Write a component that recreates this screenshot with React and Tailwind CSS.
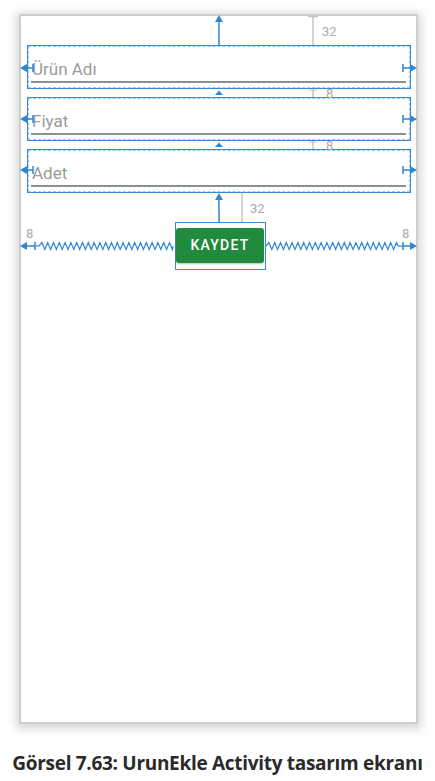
import React from "react";

const B = "#2f86d3";
const G = "#c3c6c6";

function zig(x1, x2, y, period = 5.8, amp = 3.5) {
  let d = `M${x1} ${y}`;
  let x = x1;
  let up = true;
  while (x + period / 2 <= x2) {
    x += period / 2;
    d += ` L${x.toFixed(1)} ${up ? y - amp : y + amp}`;
    up = !up;
  }
  d += ` L${x2} ${y}`;
  return d;
}

function LeftArrow({ y, tick = 33 }) {
  return (
    <g>
      <polygon points={`20,${y} 27,${y - 4} 27,${y + 4}`} fill={B} />
      <line x1="22" y1={y} x2={tick} y2={y} stroke={B} strokeWidth="1.5" />
      <line x1={tick} y1={y - 4} x2={tick} y2={y + 4} stroke={B} strokeWidth="1.5" />
    </g>
  );
}

function RightArrow({ y, tick = 403 }) {
  return (
    <g>
      <line x1={tick} y1={y - 4} x2={tick} y2={y + 4} stroke={B} strokeWidth="1.5" />
      <line x1={tick} y1={y} x2="414" y2={y} stroke={B} strokeWidth="1.5" />
      <polygon points={`417,${y} 410,${y - 4} 410,${y + 4}`} fill={B} />
    </g>
  );
}

function Field({ label }) {
  return (
    <div className="h-[44px] border border-[#3a8bd6] outline outline-1 outline-dashed outline-[#9cc6ec] -outline-offset-2">
      <div className="ml-[4px] mt-[13px] h-[20px] leading-[20px] text-[17px] text-[#9a9c9c] font-['Roboto',sans-serif]">
        {label}
      </div>
      <div className="ml-[3px] mr-[4px] mt-[2px] h-[1.5px] bg-[#8c908f]" />
    </div>
  );
}

export default function App() {
  const gaps = [89, 141];
  const rows = [68, 119, 170];
  return (
    <div className="relative w-[435px] h-[781px] bg-white overflow-hidden">
      <div className="relative ml-[19px] mt-[14px] w-[399px] h-[710px] border-2 border-[#cbd0cf] bg-white shadow-[0_2px_9px_3px_rgba(0,0,0,0.16)]">
        <div className="pt-[29px] pl-[6px] pr-[5px] flex flex-col gap-[8px]">
          <Field label="Ürün Adı" />
          <Field label="Fiyat" />
          <Field label="Adet" />
          <div className="mt-[21px] ml-[148px] w-[91px] h-[48px] border border-[#3a8bd6]">
            <div className="mt-[5px] w-[88px] h-[35px] rounded-[3px] bg-[#218a3d] shadow-[0_1px_2px_rgba(0,0,0,0.25)] flex items-center justify-center">
              <span className="text-white text-[14px] font-medium tracking-[1.2px] font-['Roboto',sans-serif]">
                KAYDET
              </span>
            </div>
          </div>
        </div>
      </div>

      <div className="mt-[27px] text-center text-[19px] leading-[24px] font-bold text-[#2a2a2a] font-['Open_Sans',sans-serif] tracking-[-0.3px] whitespace-nowrap">
        Görsel 7.63: UrunEkle Activity tasarım ekranı
      </div>

      {/* constraint overlay */}
      <div className="absolute inset-0 pointer-events-none">
        <svg width="435" height="781" viewBox="0 0 435 781" className="absolute left-0 top-0">
          <line x1="219" y1="21" x2="219" y2="45" stroke={B} strokeWidth="1.5" />
          <polygon points="219,15 215,22 223,22" fill={B} />
          <line x1="313" y1="17" x2="313" y2="45" stroke={G} strokeWidth="1.5" />
          <line x1="308" y1="16.5" x2="318" y2="16.5" stroke={G} strokeWidth="1.5" />

          {rows.map((y) => (
            <g key={y}>
              <LeftArrow y={y} />
              <RightArrow y={y} />
            </g>
          ))}

          {gaps.map((b) => (
            <g key={b}>
              <polygon points={`219,${b + 1.5} 215,${b + 6} 223,${b + 6}`} fill={B} />
              <line x1="313" y1={b} x2="313" y2={b + 8} stroke={G} strokeWidth="1.5" />
              <line x1="309" y1={b + 1} x2="317" y2={b + 1} stroke={G} strokeWidth="1" />
            </g>
          ))}

          <path d="M219 222 C 219.5 214, 218.5 207, 219 199" stroke={B} strokeWidth="1.5" fill="none" />
          <polygon points="219,193 215,200 223,200" fill={B} />
          <line x1="242" y1="193" x2="242" y2="222" stroke={G} strokeWidth="1.5" />

          <LeftArrow y={246} tick={35} />
          <line x1="35" y1="246" x2="39" y2="246" stroke={B} strokeWidth="1.2" />
          <path d={zig(39, 173, 246)} stroke={B} strokeWidth="1.2" fill="none" />
          <path d={zig(266, 398, 246)} stroke={B} strokeWidth="1.2" fill="none" />
          <line x1="398" y1="246" x2="403" y2="246" stroke={B} strokeWidth="1.2" />
          <RightArrow y={246} />
        </svg>
        <span className="absolute left-[322px] top-[24px] text-[13px] leading-[16px] text-[#a9abab] font-['Roboto',sans-serif]">32</span>
        <span className="absolute left-[326px] top-[86px] text-[13px] leading-[16px] text-[#a9abab] font-['Roboto',sans-serif]">8</span>
        <span className="absolute left-[326px] top-[138px] text-[13px] leading-[16px] text-[#a9abab] font-['Roboto',sans-serif]">8</span>
        <span className="absolute left-[250px] top-[201px] text-[13px] leading-[16px] text-[#a9abab] font-['Roboto',sans-serif]">32</span>
        <span className="absolute left-[26px] top-[226px] text-[13px] leading-[16px] text-[#a9abab] font-['Roboto',sans-serif]">8</span>
        <span className="absolute left-[402px] top-[226px] text-[13px] leading-[16px] text-[#a9abab] font-['Roboto',sans-serif]">8</span>
      </div>
    </div>
  );
}
